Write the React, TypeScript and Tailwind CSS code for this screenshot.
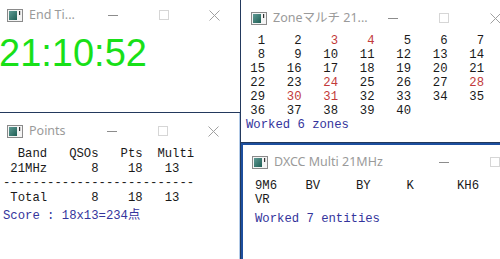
const mono = { fontFamily: '"Liberation Mono", "Noto Sans CJK JP", monospace' }

function AppIcon() {
  return (
    <svg width="16" height="13" viewBox="0 0 16 13" className="shrink-0">
      <defs>
        <linearGradient id="ic" x1="0" y1="0" x2="1" y2="1">
          <stop offset="0" stopColor="#5f9a94" />
          <stop offset="1" stopColor="#1f5f55" />
        </linearGradient>
      </defs>
      <rect x="0.5" y="0.5" width="15" height="12" fill="#f4f4f4" stroke="#8a8a8a" />
      <rect x="2" y="2" width="8" height="9" fill="url(#ic)" />
      <rect x="12" y="2" width="1.2" height="4" fill="#333" />
    </svg>
  )
}

function TitleBar({ title, padLeft }: { title: string; padLeft: string }) {
  return (
    <div className={`flex h-[30px] items-center ${padLeft}`}>
      <AppIcon />
      <span
        className="ml-[6px] flex-1 whitespace-nowrap text-[12.5px] text-[#9a9a9a]"
        style={{ fontFamily: '"Noto Sans", "Noto Sans CJK JP", sans-serif' }}
      >
        {title}
      </span>
      <div className="flex h-full shrink-0">
        <div className="flex w-[51px] items-center justify-center">
          <div className="h-px w-[10px] bg-[#8c8c8c]" />
        </div>
        <div className="flex w-[51px] items-center justify-center">
          <div className="h-[10px] w-[10px] border border-[#d6d6d6]" />
        </div>
        <div className="flex w-[51px] items-center justify-center">
          <svg width="11" height="11" viewBox="0 0 11 11">
            <path d="M0.5 0.5 L10.5 10.5 M10.5 0.5 L0.5 10.5" stroke="#a0a0a0" strokeWidth="1" />
          </svg>
        </div>
      </div>
    </div>
  )
}

const red = new Set([3, 4, 24, 28, 30, 31])
const zones = Array.from({ length: 40 }, (_, i) => i + 1)
const entities = ["9M6", "BV", "BY", "K", "KH6", "VR"]

export default function App() {
  return (
    <div className="relative flex h-[259px] w-[500px] overflow-hidden bg-white">
      {/* left column */}
      <div className="flex w-[240px] shrink-0 flex-col">
        {/* End Time */}
        <div className="h-[113px] shrink-0 border-b border-[#23395d]">
          <TitleBar title="End Ti..." padLeft="pl-[7px]" />
          <div
            className="mt-[4px] -ml-[1px] text-[38px] leading-none text-[#18e018]"
            style={{ fontFamily: '"Liberation Sans", Arial, sans-serif' }}
          >
            21:10:52
          </div>
        </div>

        {/* Points */}
        <div className="flex-1 border-r border-[#b3cbe8] pt-[3px]">
          <TitleBar title="Points" padLeft="pl-[7px]" />
          <div className="mt-[1px] pl-[3px] text-[12.25px] leading-[14.5px] text-[#1a1a1a]" style={mono}>
            <div className="whitespace-pre">{"  Band   QSOs   Pts  Multi"}</div>
            <div className="whitespace-pre">{" 21MHz      8    18   13"}</div>
            <div className="whitespace-pre">{"--------------------------"}</div>
            <div className="whitespace-pre">{" Total      8    18   13"}</div>
            <div className="mt-[4px] whitespace-pre text-[#34349c]">{"Score : 18x13=234点"}</div>
          </div>
        </div>
      </div>

      {/* right column */}
      <div className="flex w-[260px] shrink-0 flex-col border-l border-[#23395d]">
        {/* Zone multi */}
        <div className="h-[143px] w-[278px] shrink-0 border-b border-[#23395d] pt-[3px]">
          <TitleBar title="Zoneマルチ 21..." padLeft="pl-[10px]" />
          <div className="pl-[5px] pt-[1px] text-[12.25px] leading-[14px]" style={mono}>
            <div className="grid grid-cols-[19px_repeat(6,36.5px)]">
              {zones.map((z) => (
                <div key={z} className={`text-right ${red.has(z) ? "text-[#c23a3a]" : "text-[#1a1a1a]"}`}>
                  {z}
                </div>
              ))}
            </div>
            <div className="text-[#34349c]">Worked 6 zones</div>
          </div>
        </div>

        {/* DXCC multi */}
        <div className="w-[330px] flex-1 border-t-2 border-l-2 border-[#1d4f9e] pt-[2px]">
          <TitleBar title="DXCC Multi 21MHz" padLeft="pl-[9px]" />
          <div className="pl-[12px] pt-[2px] text-[12.25px] leading-[14px]" style={mono}>
            <div className="grid grid-cols-[repeat(5,50.5px)] text-[#1a1a1a]">
              {entities.map((e) => (
                <div key={e}>{e}</div>
              ))}
            </div>
            <div className="mt-[5px] text-[#34349c]">Worked 7 entities</div>
          </div>
        </div>
      </div>
    </div>
  )
}
